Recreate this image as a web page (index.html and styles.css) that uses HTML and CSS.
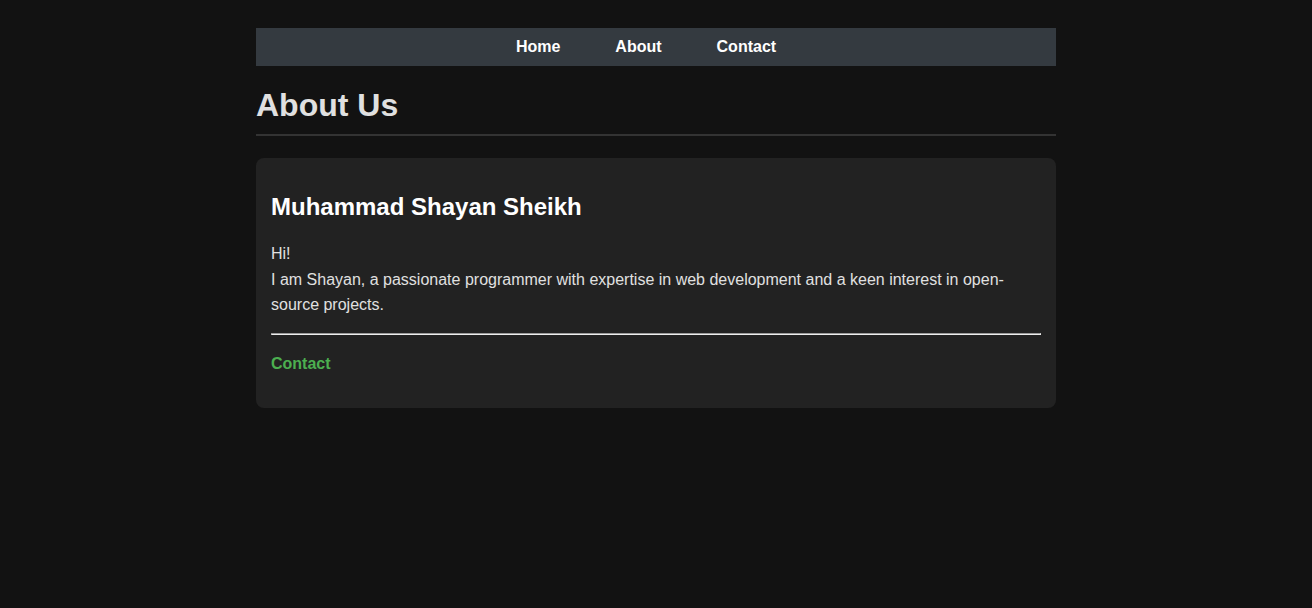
FILE: index.html
```html
<!DOCTYPE html>
<html lang="en">
<head>
<meta charset="utf-8">
<meta name="viewport" content="width=device-width, initial-scale=1">
<title>About Us</title>
<link rel="stylesheet" href="styles.css">
</head>
<body>
<div class="page">
  <nav class="nav">
    <a class="nav-link" href="#home">Home</a>
    <a class="nav-link" href="#about">About</a>
    <a class="nav-link" href="#contact">Contact</a>
  </nav>
  <h1 class="title">About Us</h1>
  <main class="card">
    <h2 class="name">Muhammad Shayan Sheikh</h2>
    <p class="bio">Hi!<br>I am Shayan, a passionate programmer with expertise in web development and a keen interest in open-source projects.</p>
    <hr class="rule">
    <p class="more"><a class="contact-link" href="#contact">Contact</a></p>
  </main>
</div>
</body>
</html>
```

FILE: styles.css
```css
body {
  margin: 0;
  padding: 28px 20px;
  background: #121212;
  color: #e0e0e0;
  font-family: Arial, "Liberation Sans", sans-serif;
  font-size: 16px;
  line-height: 1.6;
}

.page {
  max-width: 800px;
  margin: 0 auto;
}

.nav {
  display: flex;
  justify-content: center;
  gap: 55px;
  padding: 6px 20px 6px 0;
  background: #343a40;
}

.nav-link {
  color: #ffffff;
  font-weight: bold;
  text-decoration: none;
}

.title {
  margin: 14px 0 22px;
  padding-bottom: 3px;
  border-bottom: 2px solid #333333;
  font-size: 32px;
}

.card {
  padding: 15px;
  border-radius: 8px;
  background: #222222;
}

.name {
  margin: 15px 0;
  color: #ffffff;
  font-size: 24px;
}

.bio {
  margin: 15px 0;
}

.rule {
  margin: 15px 0;
}

.more {
  margin: 16px 0;
}

.contact-link {
  color: #4caf50;
  font-weight: bold;
  text-decoration: none;
}
```
